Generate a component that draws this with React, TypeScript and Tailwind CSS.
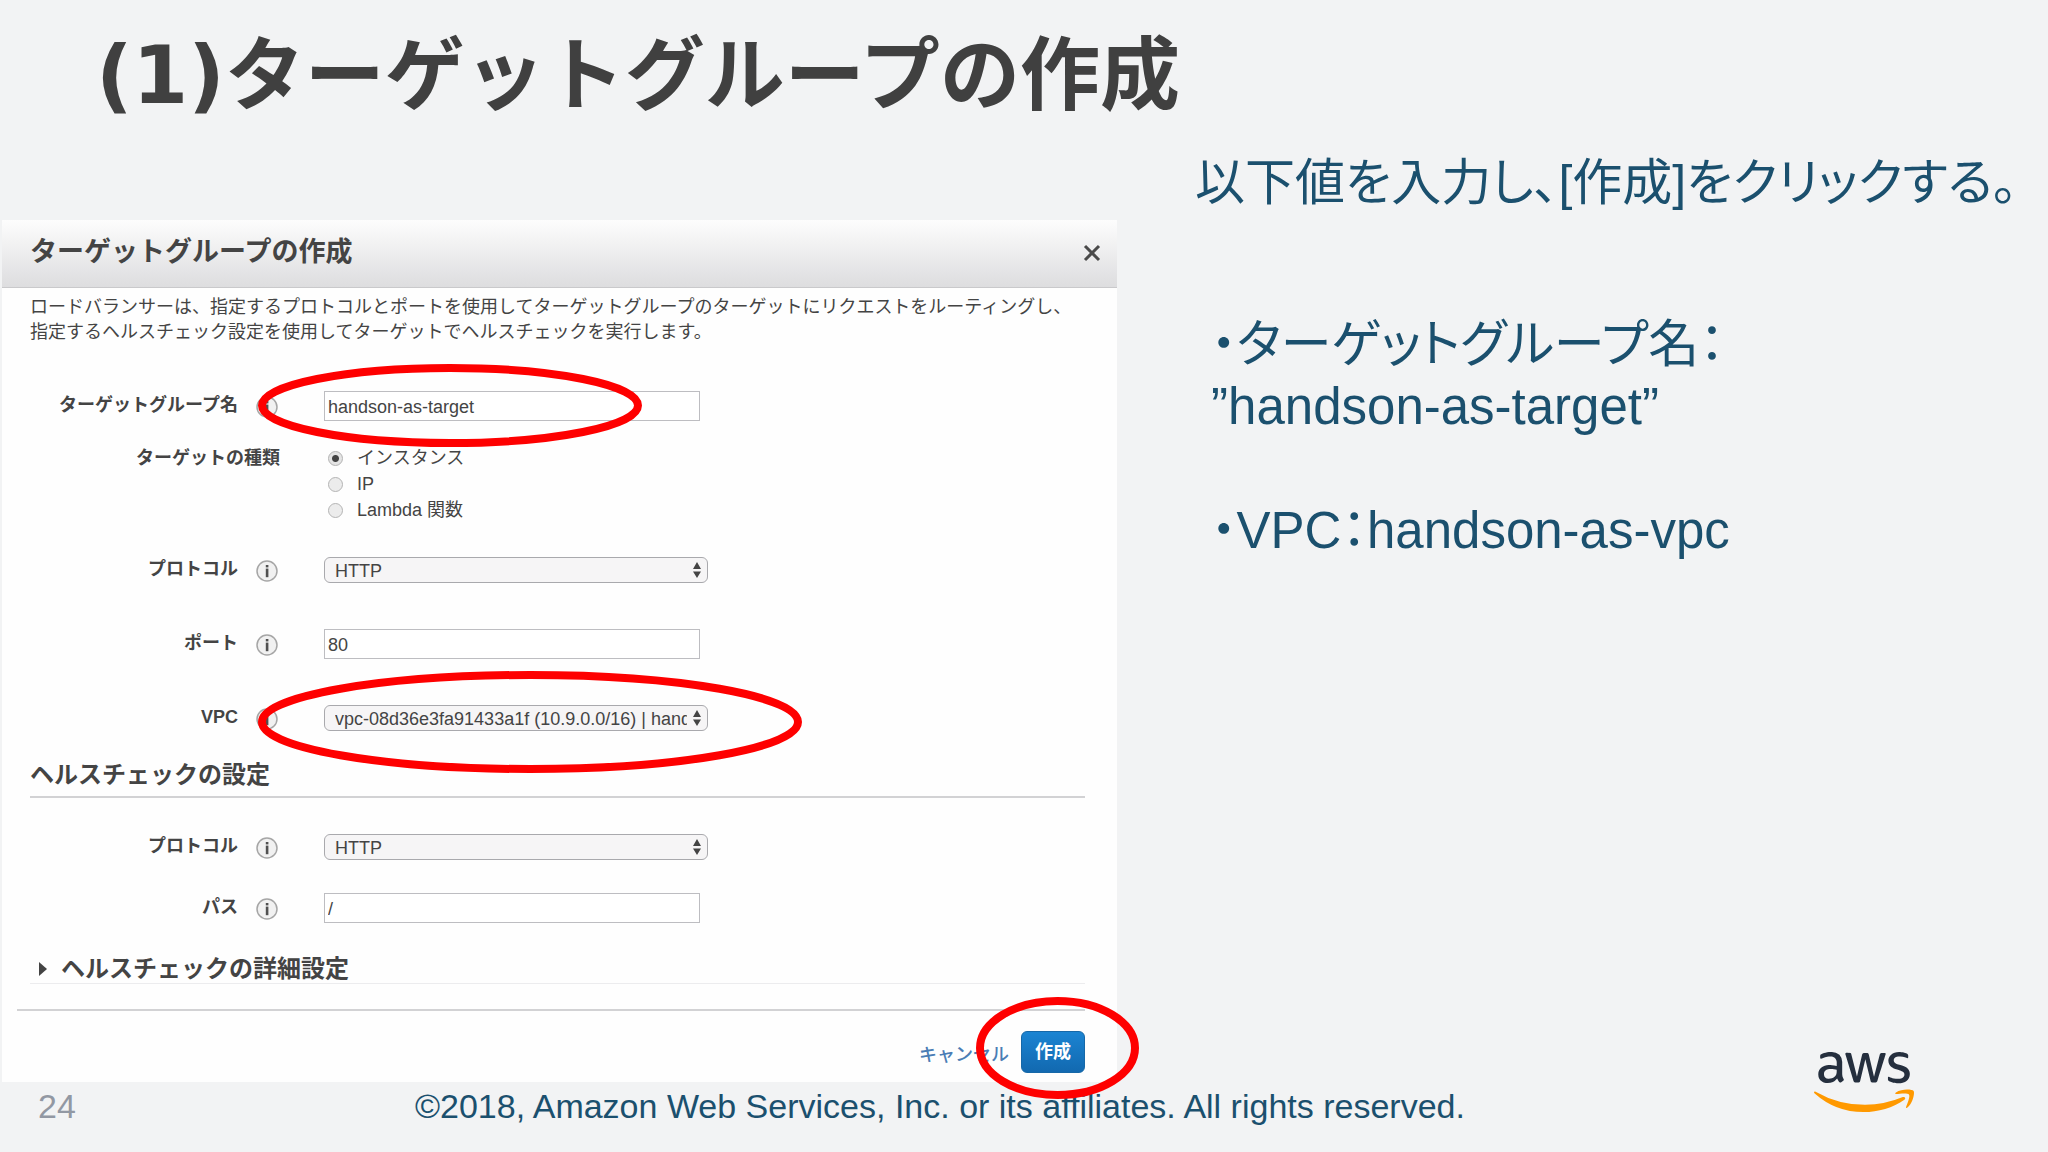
import React, { useState } from 'react';
import { FaAws } from 'react-icons/fa';

interface FieldRowProps {
  id: string;
  label: string;
  className?: string;
  children: React.ReactNode;
}

function InfoIcon() {
  return (
    <svg viewBox="0 0 22 22" className="mt-[2px] ml-[18px] mr-[46px] w-[22px] h-[22px] shrink-0" aria-hidden="true">
      <circle cx="11" cy="11" r="10" fill="#f1f1f1" stroke="#a6a6a6" strokeWidth="1.5" />
      <rect x="9.8" y="5" width="2.6" height="2.4" fill="#505050" />
      <rect x="9.8" y="8.600" width="2.6" height="8.6" fill="#505050" />
    </svg>
  );
}

// red ring drawn over a field to point it out
function Ring({ width, height, className }: { width: number; height: number; className: string }) {
  return (
    <svg width={width} height={height} className={`absolute max-w-none pointer-events-none ${className}`} aria-hidden="true">
      <ellipse cx={width / 2} cy={height / 2} rx={width / 2 - 4} ry={height / 2 - 4} fill="none" stroke="#fe0000" strokeWidth="8" />
    </svg>
  );
}

function FieldRow({ id, label, className, children }: FieldRowProps) {
  return (
    <div className={`relative flex items-center h-[30px] ${className ?? ''}`}>
      <label htmlFor={id} className="w-[208px] pb-[2px] shrink-0 text-right font-bold">{label}</label>
      <InfoIcon />
      {children}
    </div>
  );
}

interface TextFieldProps {
  id: string;
  value: string;
  onChange: (v: string) => void;
}

function TextField({ id, value, onChange }: TextFieldProps) {
  return (
    <input
      id={id}
      type="text"
      value={value}
      onChange={(e) => onChange(e.target.value)}
      className="w-[376px] h-[30px] px-[3px] pt-[2px] bg-white border border-[#bdbdc1] outline-none"
    />
  );
}

function SelectField({ id, options }: { id: string; options: string[] }) {
  return (
    <div className="relative w-[384px]">
      <select id={id} className="block appearance-none w-full h-[26px] pl-[10px] pr-[20px] rounded-md border border-[#a9a9ad] bg-[#f6f5f6] outline-none">
        {options.map((o) => <option key={o}>{o}</option>)}
      </select>
      <svg viewBox="0 0 10 18" className="absolute right-[6px] top-1 w-[10px] h-[18px] pointer-events-none" aria-hidden="true">
        <path d="M5 1 9 8H1zM5 17 1 10.500h8z" fill="#444" />
      </svg>
    </div>
  );
}

const TARGET_TYPES = ['インスタンス', 'IP', 'Lambda 関数'];

function TargetGroupDialog() {
  const [name, setName] = useState('handson-as-target');
  const [targetType, setTargetType] = useState(TARGET_TYPES[0]);
  const [port, setPort] = useState('80');
  const [path, setPath] = useState('/');

  return (
    <section className="relative z-10 ml-[2px] bg-[#fefefe] text-[18px] text-[#444]">
      <header className="flex items-center justify-between h-[68px] pl-7 pr-4 pb-[2px] bg-linear-to-b from-[#fdfdfd] to-[#dddddf] border-b border-[#c9c9cb]">
        <h2 className="text-[27px] font-bold">ターゲットグループの作成</h2>
        <button type="button" aria-label="閉じる">
          <svg viewBox="0 0 18 18" className="w-[18px] h-[18px]">
            <path d="M2 2 16 16M16 2 2 16" stroke="#4a4a4a" strokeWidth="3" />
          </svg>
        </button>
      </header>

      <form className="pb-[9px]" onSubmit={(e) => e.preventDefault()}>
        <div className="pl-7 pr-8 pt-[7px]">
          <p className="leading-[25px] whitespace-nowrap">
            ロードバランサーは、指定するプロトコルとポートを使用してターゲットグループのターゲットにリクエストをルーティングし、<br />
            指定するヘルスチェック設定を使用してターゲットでヘルスチェックを実行します。
          </p>

          <FieldRow id="name" label="ターゲットグループ名" className="mt-[46px]">
            <TextField id="name" value={name} onChange={setName} />
            <Ring width={384} height={83} className="left-[228px] -top-[27px]" />
          </FieldRow>

          <fieldset className="flex mt-6" aria-labelledby="target-type">
            <span id="target-type" className="w-[250px] shrink-0 text-right font-bold leading-[26px]">ターゲットの種類</span>
            <div className="ml-12">
              {TARGET_TYPES.map((t) => (
                <label key={t} className="flex items-center gap-[14px] h-[26px]">
                  <input
                    type="radio"
                    name="targetType"
                    checked={targetType === t}
                    onChange={() => setTargetType(t)}
                    className="appearance-none w-[15px] h-[15px] rounded-full border border-[#b4b4b4] bg-[#ececec] checked:bg-[radial-gradient(circle,#444_0_3px,#e4e4e4_4px)]"
                  />
                  {t}
                </label>
              ))}
            </div>
          </fieldset>

          <FieldRow id="protocol" label="プロトコル" className="mt-8">
            <SelectField id="protocol" options={['HTTP', 'HTTPS']} />
          </FieldRow>
          <FieldRow id="port" label="ポート" className="mt-11">
            <TextField id="port" value={port} onChange={setPort} />
          </FieldRow>
          <FieldRow id="vpc" label="VPC" className="mt-11">
            <SelectField id="vpc" options={['vpc-08d36e3fa91433a1f (10.9.0.0/16) | handson-as-vpc']} />
            <Ring width={544} height={102} className="left-[228px] -top-8" />
          </FieldRow>

          <h3 className="mt-6 pb-[3px] text-[24px] leading-9 font-bold border-b-2 border-[#d2d2d4]">ヘルスチェックの設定</h3>

          <FieldRow id="hc-protocol" label="プロトコル" className="mt-[34px]">
            <SelectField id="hc-protocol" options={['HTTP', 'HTTPS']} />
          </FieldRow>
          <FieldRow id="hc-path" label="パス" className="mt-[31px]">
            <TextField id="hc-path" value={path} onChange={setPath} />
          </FieldRow>

          <button type="button" className="flex items-center w-full mt-8 text-[24px] leading-7 font-bold border-b border-[#ececee]">
            <svg viewBox="0 0 8 14" className="ml-[9px] mr-[14px] w-2 h-[14px]" aria-hidden="true">
              <path d="M0 0 8 7 0 14z" fill="#444" />
            </svg>
            ヘルスチェックの詳細設定
          </button>
        </div>

        <div className="relative flex items-center justify-end gap-3 ml-[15px] mr-8 mt-[25px] pt-5 border-t-2 border-[#d2d2d4]">
          <a href="#" className="pt-[6px] font-medium text-[#4a7db5]">キャンセル</a>
          <button type="submit" className="w-16 h-[42px] rounded-md border border-[#1668a8] bg-linear-to-b from-[#1b84d2] to-[#1269b0] text-white font-bold">作成</button>
          <Ring width={163} height={102} className="-right-[54px] -top-[14px]" />
        </div>
      </form>
    </section>
  );
}

function AwsLogo() {
  return (
    <div className="ml-auto mr-[134px] -mt-[40px]">
      <svg width="0" height="0" className="absolute" aria-hidden="true">
        <linearGradient id="aws" x1="0" y1="0" x2="0" y2="1">
          <stop offset="0.62" stopColor="#252f3e" />
          <stop offset="0.62" stopColor="#ff9900" />
        </linearGradient>
      </svg>
      <FaAws className="w-[100px] h-20" style={{ fill: 'url(#aws)' }} title="aws" />
    </div>
  );
}

export default function App() {
  return (
    <div lang="ja" className="flex flex-col min-h-screen overflow-hidden bg-[#f2f3f4] font-['Liberation_Sans','Noto_Sans_CJK_JP',sans-serif]">
      <header className="h-[152px] pl-[96px] whitespace-nowrap">
        <h1 className="text-[80px] leading-[152px] font-bold text-[#404040] font-['DejaVu_Sans','Noto_Sans_CJK_JP',sans-serif]">(1)ターゲットグループの作成</h1>
      </header>

      <main className="grid grid-cols-[6fr_5fr]">
        <div className="min-w-0 pt-[68px]">
          <TargetGroupDialog />
        </div>
        <div className="min-w-0 pl-[78px] text-[51px] leading-[62px] text-[#1b506e] whitespace-nowrap [font-feature-settings:'palt']">
          <p className="text-[50px]">以下値を入力し、[作成]をクリックする。</p>
          <div className="pl-4 mt-[100px]">
            <p>・ターゲットグループ名：</p>
            <p>”handson-as-target”</p>
            <p className="mt-[62px]">・VPC：handson-as-vpc</p>
          </div>
        </div>
      </main>

      <footer className="flex items-start text-[34px] leading-[48px] text-[#1b506e] whitespace-nowrap">
        <span className="w-[415px] pl-[38px] shrink-0 text-[#9298a3]">24</span>
        <p>©2018, Amazon Web Services, Inc. or its affiliates. All rights reserved.</p>
        <AwsLogo />
      </footer>
    </div>
  );
}
